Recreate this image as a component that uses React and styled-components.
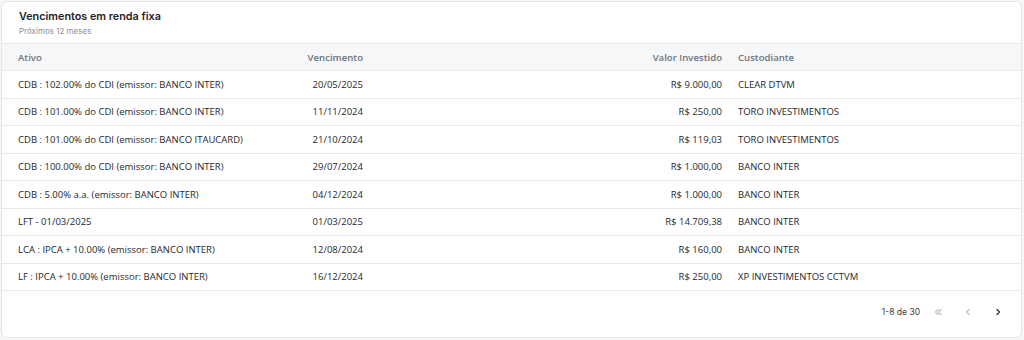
import React from "react";
import styled, { createGlobalStyle } from "styled-components";

const Global = createGlobalStyle`
  html, body { margin: 0; padding: 0; background: #f6f7f9; }
  body { font-family: "Open Sans", sans-serif; }
  * { box-sizing: border-box; }
`;

const Card = styled.section`
  margin: 1px 2px 0 1px;
  width: 1021px;
  height: 337px;
  background: #fff;
  border: 1px solid #e3e5e8;
  border-radius: 6px;
  display: flex;
  flex-direction: column;
  overflow: hidden;
`;

const Head = styled.header`
  padding: 8px 17px 6px;
  display: flex;
  flex-direction: column;
  gap: 1px;
`;

const Title = styled.h2`
  margin: 0;
  font-family: Inter, sans-serif;
  font-size: 10.8px;
  font-weight: 600;
  color: #1f2328;
  line-height: 14px;
`;

const Sub = styled.span`
  font-family: Inter, sans-serif;
  font-size: 8px;
  color: #8a8f98;
  line-height: 12px;
`;

const Grid = styled.div`
  display: grid;
  grid-template-columns: 288px 81px 359px 1fr;
`;

const Row = styled(Grid)`
  height: ${p => (p.$head ? "28px" : "27.5px")};
  background: ${p => (p.$head ? "#f6f7f9" : "#fff")};
  border-top: ${p => (p.$head ? "1px solid #e5e7eb" : "none")};
  border-bottom: 1px solid #e8e9ec;
  align-items: center;
`;

const Cell = styled.div`
  font-size: ${p => (p.$head ? "9.6px" : "9.5px")};
  color: ${p => (p.$head ? "#6e737b" : "#25282d")};
  font-weight: ${p => (p.$head ? 600 : 400)};
  text-align: ${p => (p.$right ? "right" : "left")};
  padding: ${p => (p.$first ? "0 8px 0 16px" : "0 8px")};
  white-space: nowrap;
`;

const Footer = styled.footer`
  flex: 1;
  display: flex;
  justify-content: flex-end;
  align-items: center;
  padding: 0 8px 4px 0;
  font-family: Inter, sans-serif;
`;

const Range = styled.span`
  font-size: 8.5px;
  color: #3a3d42;
  margin-right: 3px;
`;

const PageBtn = styled.button`
  width: 30px;
  height: 20px;
  border: none;
  background: none;
  padding: 0;
  display: flex;
  align-items: center;
  justify-content: center;
  color: ${p => (p.disabled ? "#b9bcc2" : "#2a2d31")};
`;

const Ico = ({ d }) => (
  <svg width="10" height="10" viewBox="0 0 10 10" fill="none" stroke="currentColor" strokeWidth="1.2" strokeLinecap="round" strokeLinejoin="round">
    <path d={d} />
  </svg>
);

const rows = [
  ["CDB : 102.00% do CDI (emissor: BANCO INTER)", "20/05/2025", "R$ 9.000,00", "CLEAR DTVM"],
  ["CDB : 101.00% do CDI (emissor: BANCO INTER)", "11/11/2024", "R$ 250,00", "TORO INVESTIMENTOS"],
  ["CDB : 101.00% do CDI (emissor: BANCO ITAUCARD)", "21/10/2024", "R$ 119,03", "TORO INVESTIMENTOS"],
  ["CDB : 100.00% do CDI (emissor: BANCO INTER)", "29/07/2024", "R$ 1.000,00", "BANCO INTER"],
  ["CDB : 5.00% a.a. (emissor: BANCO INTER)", "04/12/2024", "R$ 1.000,00", "BANCO INTER"],
  ["LFT - 01/03/2025", "01/03/2025", "R$ 14.709,38", "BANCO INTER"],
  ["LCA : IPCA + 10.00% (emissor: BANCO INTER)", "12/08/2024", "R$ 160,00", "BANCO INTER"],
  ["LF : IPCA + 10.00% (emissor: BANCO INTER)", "16/12/2024", "R$ 250,00", "XP INVESTIMENTOS CCTVM"],
];

export default function App() {
  return (
    <>
      <Global />
      <Card>
        <Head>
          <Title>Vencimentos em renda fixa</Title>
          <Sub>Próximos 12 meses</Sub>
        </Head>
        <Row $head>
          <Cell $head $first>Ativo</Cell>
          <Cell $head $right>Vencimento</Cell>
          <Cell $head $right>Valor Investido</Cell>
          <Cell $head>Custodiante</Cell>
        </Row>
        {rows.map((r, i) => (
          <Row key={i}>
            <Cell $first>{r[0]}</Cell>
            <Cell $right>{r[1]}</Cell>
            <Cell $right>{r[2]}</Cell>
            <Cell>{r[3]}</Cell>
          </Row>
        ))}
        <Footer>
          <Range>1-8 de 30</Range>
          <PageBtn disabled><Ico d="M5 2.5 2.5 5 5 7.5M8 2.5 5.5 5 8 7.5" /></PageBtn>
          <PageBtn disabled><Ico d="M6 2.5 3.5 5 6 7.5" /></PageBtn>
          <PageBtn><Ico d="M4 2.5 6.5 5 4 7.5" /></PageBtn>
        </Footer>
      </Card>
    </>
  );
}
